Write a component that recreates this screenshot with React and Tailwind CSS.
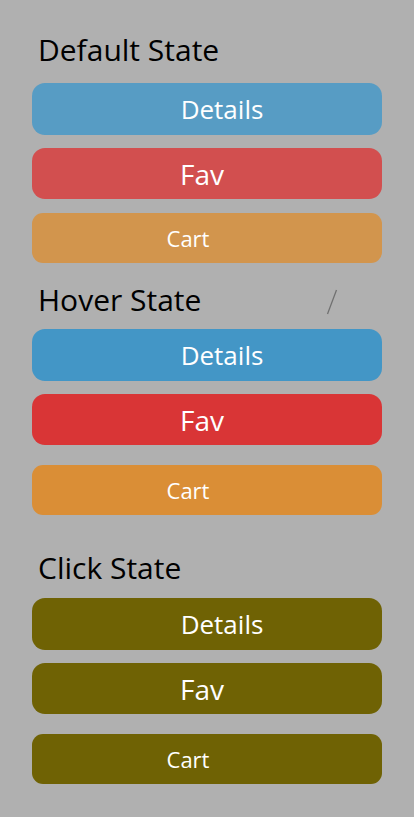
import React from 'react';

const sections = [
  {
    title: 'Default State',
    headClass: 'mt-[32px] mb-[15px]',
    slash: false,
    colors: ['bg-[#579cc4]', 'bg-[#d24f4f]', 'bg-[#d2954d]'],
  },
  {
    title: 'Hover State',
    headClass: 'mt-[19px] mb-[11px]',
    slash: true,
    colors: ['bg-[#4396c6]', 'bg-[#d93536]', 'bg-[#da8e36]'],
  },
  {
    title: 'Click State',
    headClass: 'mt-[35px] mb-[12px]',
    slash: false,
    colors: ['bg-[#6f6204]', 'bg-[#6f6204]', 'bg-[#6f6204]'],
  },
];

const StateBlock = ({ title, headClass, slash, colors }) => (
  <section>
    <div className={`flex items-center h-[36px] pl-[6px] ${headClass}`}>
      <h2 className="text-[30px] leading-[36px] text-black">{title}</h2>
      {slash && (
        <svg className="ml-auto mr-[44px] mt-[4px]" width="12" height="26" viewBox="0 0 12 26">
          <line x1="10.5" y1="1" x2="1.5" y2="25" stroke="#707070" strokeWidth="1.3" />
        </svg>
      )}
    </div>

    {/* Buttons */}
    <button className={`flex w-full h-[52px] items-center justify-center rounded-[13px] pl-[30px] text-[26px] text-white ${colors[0]}`}>
      Details
    </button>
    <button className={`flex w-full h-[51px] mt-[13px] items-center justify-center rounded-[13px] pr-[10px] text-[28px] text-white ${colors[1]}`}>
      Fav
    </button>
    <button className={`flex w-full h-[50px] ${title === 'Default State' ? 'mt-[14px]' : 'mt-[20px]'} items-center justify-center rounded-[11px] pr-[38px] text-[22px] text-white ${colors[2]}`}>
      Cart
    </button>
  </section>
);

export default function App() {
  return (
    <div className="flex flex-col min-h-[817px] w-full bg-[#b0b0b0] px-8 font-['Open_Sans',sans-serif]">
      {sections.map((s) => (
        <StateBlock key={s.title} {...s} />
      ))}
    </div>
  );
}
